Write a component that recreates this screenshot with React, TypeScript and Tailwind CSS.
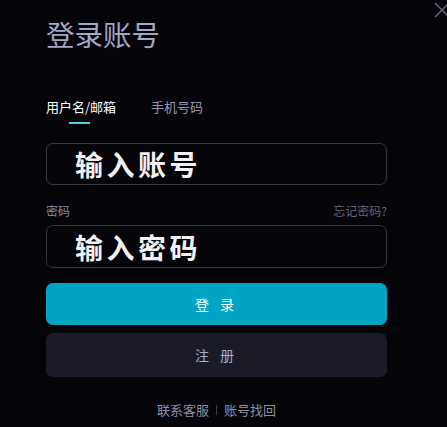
import type React from 'react';

const font = '"Noto Sans CJK SC", "Noto Sans", sans-serif';

const App: React.FC = () => {
  return (
    <div
      className="relative h-[427px] w-[447px] overflow-hidden bg-[#050409]"
      style={{ fontFamily: font }}
    >
      {/* Close */}
      <button type="button" className="absolute right-[-4px] top-[1px] p-0">
        <svg width="18" height="18" viewBox="0 0 18 18" fill="none">
          <path d="M2 2L16 16M16 2L2 16" stroke="#6c6d84" strokeWidth="1.4" />
        </svg>
      </button>

      <div className="ml-[46px] w-[341px]">
        <h1 className="mt-[18px] text-[28.5px] leading-[32px] font-normal text-[#a3a6c4]">
          登录账号
        </h1>

        {/* Tabs */}
        <div className="mt-[47px] flex gap-[35px] text-[13px] leading-[20px]">
          <span className="text-white">用户名/邮箱</span>
          <span className="text-[#9597ae]">手机号码</span>
        </div>
        <div className="ml-[23px] mt-[5px] h-[2px] w-[21px] bg-[#3fd6dc]" />

        {/* Account */}
        <div className="mt-[19px] flex h-[42px] items-center rounded-[7px] border border-[#34353f] pl-[28px]">
          <input
            type="text"
            placeholder="输入账号"
            className="w-full bg-transparent text-[28px] font-bold tracking-[3.5px] text-[#f4f0f2] outline-none placeholder:text-[#f4f0f2]"
          />
        </div>

        <div className="mt-[17px] flex items-center justify-between text-[12px] leading-[18px]">
          <span className="text-[#8a8ca8]">密码</span>
          <span className="text-[#62647e]">忘记密码?</span>
        </div>

        {/* Password */}
        <div className="mt-[5px] flex h-[43px] items-center rounded-[7px] border border-[#34353f] pl-[28px]">
          <input
            type="text"
            placeholder="输入密码"
            className="w-full bg-transparent text-[28px] font-bold tracking-[3.5px] text-[#f4f0f2] outline-none placeholder:text-[#f4f0f2]"
          />
        </div>

        <button
          type="button"
          className="mt-[15px] flex h-[42px] w-full items-center justify-center rounded-[7px] bg-[#00a5c3] text-[14px] tracking-[4px] text-white"
        >
          登 录
        </button>
        <button
          type="button"
          className="mt-[8px] flex h-[44px] w-full items-center justify-center rounded-[7px] bg-[#1a1b27] text-[14px] tracking-[4px] text-[#a8aed0]"
        >
          注 册
        </button>

        <div className="mt-[23px] flex items-center justify-center gap-[7px] text-[13px] leading-[20px] text-[#8e8fa3]">
          <span>联系客服</span>
          <span className="h-[10px] w-px bg-[#3a3a46]" />
          <span>账号找回</span>
        </div>
      </div>
    </div>
  );
};

export default App;
